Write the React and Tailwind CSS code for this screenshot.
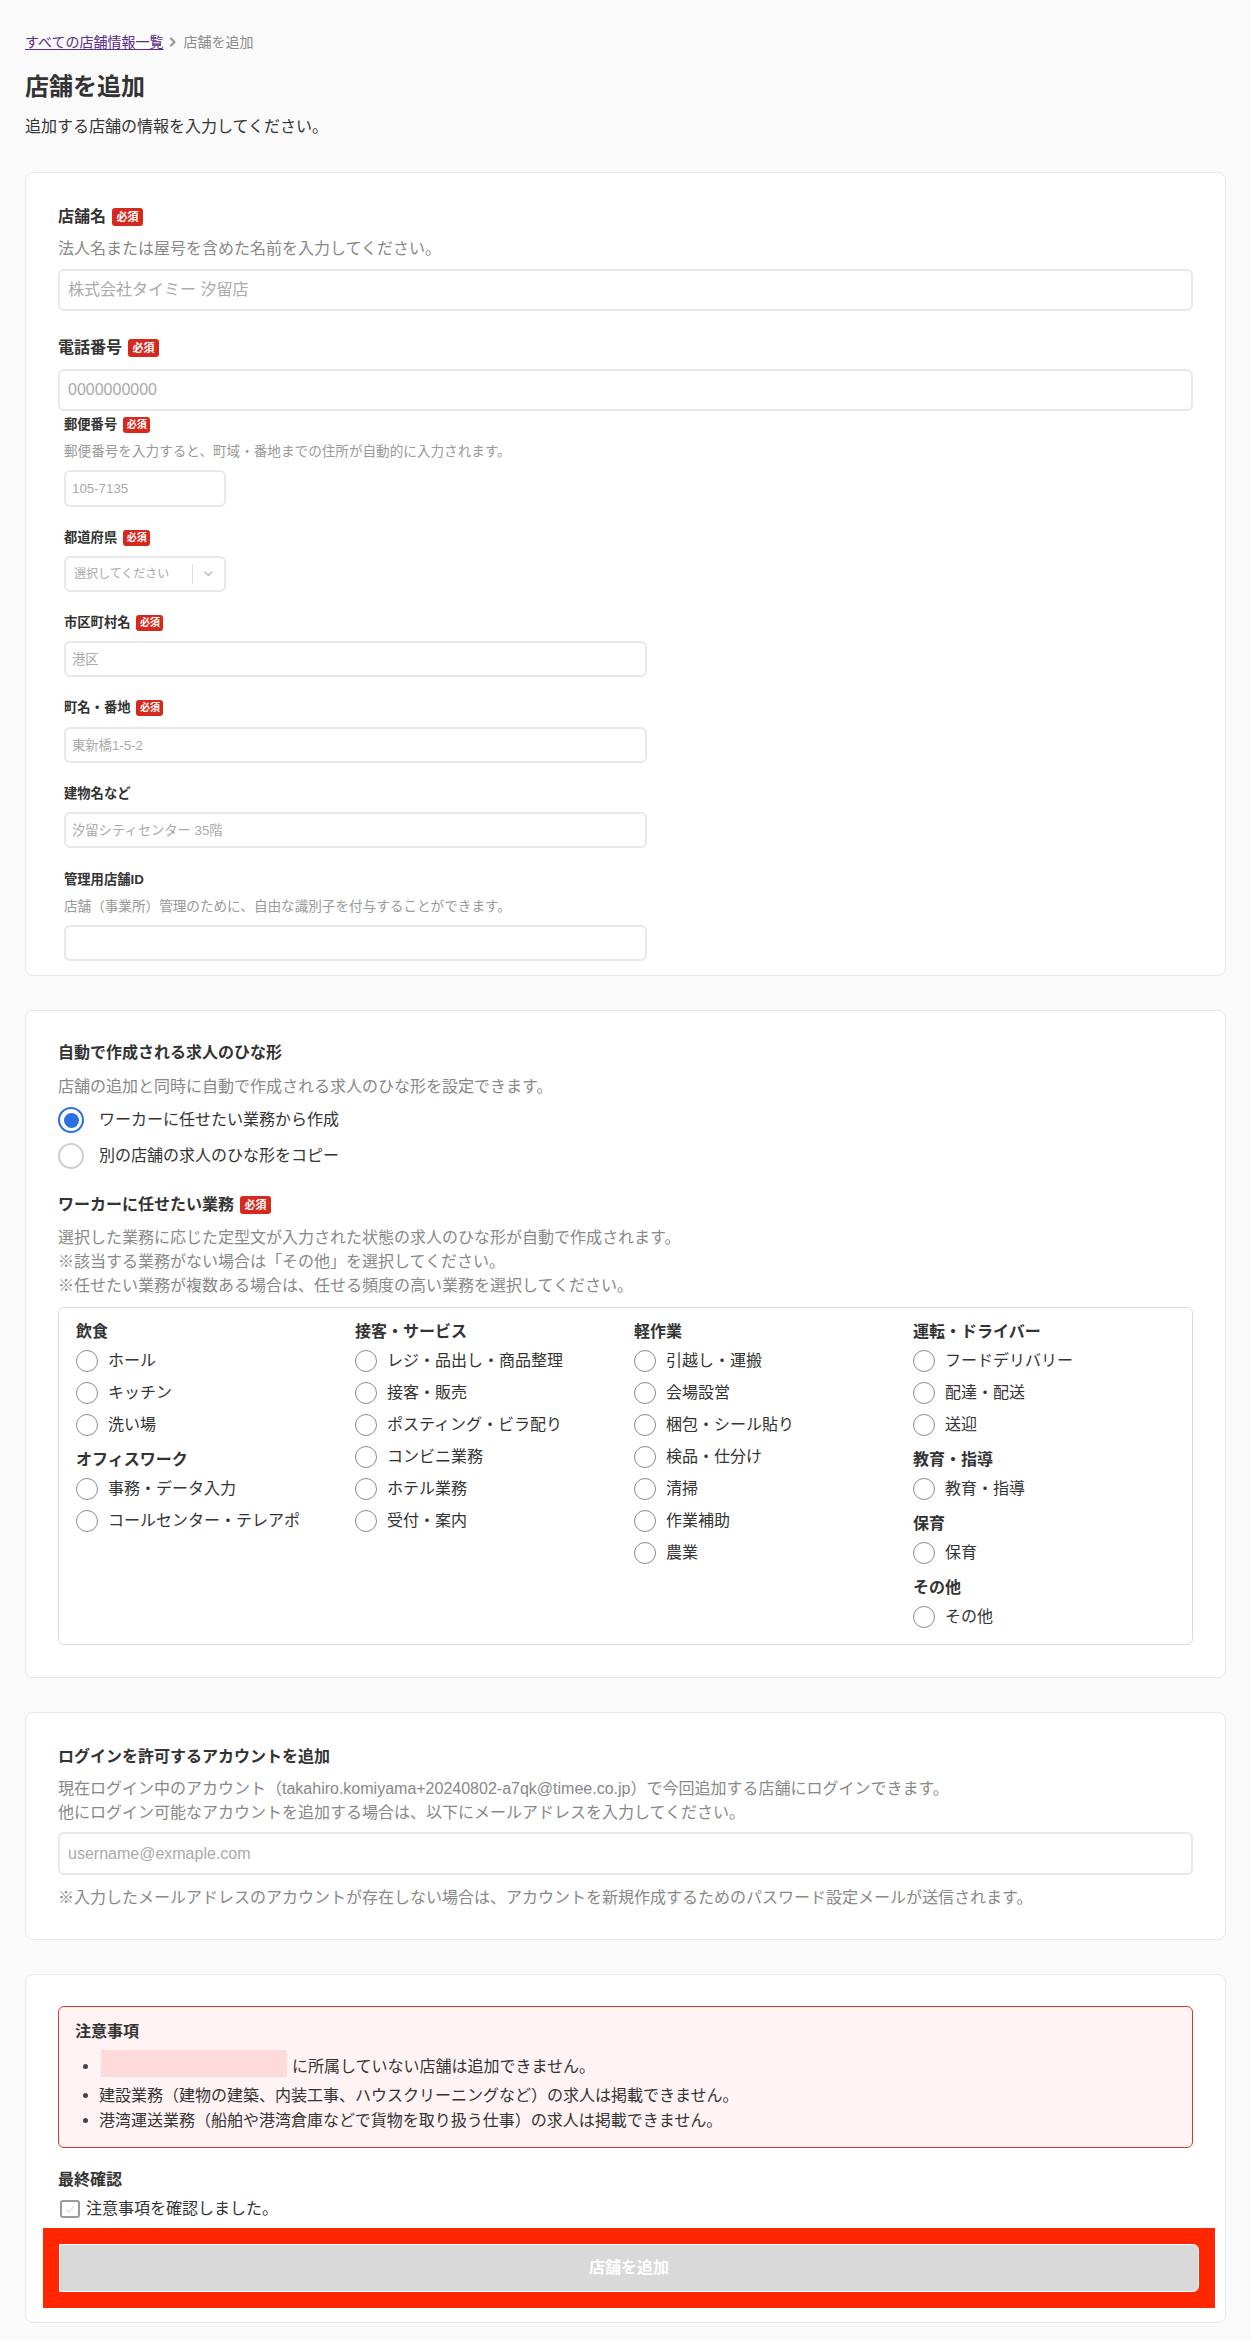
import React from "react";

function Badge({ small = false }) {
  if (small) {
    return (
      <span className="ml-[6px] inline-flex h-4 w-[27px] items-center justify-center rounded-[3px] bg-[#d6281d] text-[10px] font-bold leading-none text-white">
        必須
      </span>
    );
  }
  return (
    <span className="ml-[6px] inline-flex h-[18px] w-[31px] items-center justify-center rounded-[3px] bg-[#d6281d] text-[11px] font-bold leading-none text-white">
      必須
    </span>
  );
}

function FieldLabel({ children, required }) {
  return (
    <div className="flex items-center text-base font-bold leading-6 text-[#333]">
      <span>{children}</span>
      {required && <Badge />}
    </div>
  );
}

function SubLabel({ children, required, className = "" }) {
  return (
    <div className={`flex items-center text-[13.3px] font-bold leading-5 text-[#333] ${className}`}>
      <span>{children}</span>
      {required && <Badge small />}
    </div>
  );
}

function Radio({ label }) {
  return (
    <label className="flex h-8 items-center">
      <span className="h-[22px] w-[22px] shrink-0 rounded-full border-[1.5px] border-[#8c8c8c] bg-white" />
      <span className="ml-[10px] text-base text-[#333]">{label}</span>
    </label>
  );
}

function Group({ title, items, first }) {
  return (
    <div className={first ? "" : "mt-[9px]"}>
      <div className="mb-[3px] text-base font-bold leading-5 text-[#333]">{title}</div>
      {items.map((it) => (
        <Radio key={it} label={it} />
      ))}
    </div>
  );
}

const columns = [
  [
    { title: "飲食", items: ["ホール", "キッチン", "洗い場"] },
    { title: "オフィスワーク", items: ["事務・データ入力", "コールセンター・テレアポ"] },
  ],
  [
    {
      title: "接客・サービス",
      items: [
        "レジ・品出し・商品整理",
        "接客・販売",
        "ポスティング・ビラ配り",
        "コンビニ業務",
        "ホテル業務",
        "受付・案内",
      ],
    },
  ],
  [
    {
      title: "軽作業",
      items: ["引越し・運搬", "会場設営", "梱包・シール貼り", "検品・仕分け", "清掃", "作業補助", "農業"],
    },
  ],
  [
    { title: "運転・ドライバー", items: ["フードデリバリー", "配達・配送", "送迎"] },
    { title: "教育・指導", items: ["教育・指導"] },
    { title: "保育", items: ["保育"] },
    { title: "その他", items: ["その他"] },
  ],
];

const inputBase =
  "block w-full rounded-md border-2 border-[#e8e8e8] bg-white text-[#333] outline-none placeholder:text-[#aaa]";

export default function App() {
  return (
    <div className="min-h-screen bg-[#fafafa] px-[25px] pt-8 pb-[25px] font-['Liberation_Sans','Noto_Sans_CJK_JP',sans-serif] text-[#333]">
      {/* breadcrumb */}
      <nav className="flex items-center text-sm leading-5">
        <a href="#" className="text-[#5a2a8c] underline underline-offset-2">
          すべての店舗情報一覧
        </a>
        <svg className="mx-[6px]" width="8" height="10" viewBox="0 0 8 10" fill="none">
          <path d="M2 1.5 L5.5 5 L2 8.5" stroke="#999" strokeWidth="2.2" strokeLinecap="round" strokeLinejoin="round" />
        </svg>
        <span className="text-[#8a8a8a]">店舗を追加</span>
      </nav>

      <h1 className="mt-[19px] text-2xl font-bold leading-8 text-[#333]">店舗を追加</h1>
      <p className="mt-3 text-base leading-6 text-[#333]">追加する店舗の情報を入力してください。</p>

      {/* store info */}
      <section className="mt-[33px] rounded-lg border border-[#e8e8e8] bg-white px-8 pt-8 pb-[14px]">
        <FieldLabel required>店舗名</FieldLabel>
        <p className="mt-2 text-base leading-6 text-[#888]">法人名または屋号を含めた名前を入力してください。</p>
        <input className={`mt-2 h-[42px] px-2 text-base ${inputBase}`} placeholder="株式会社タイミー 汐留店" />

        <div className="mt-[25px]">
          <FieldLabel required>電話番号</FieldLabel>
        </div>
        <input className={`mt-[9px] h-[42px] px-2 text-base ${inputBase}`} placeholder="0000000000" />

        {/* address block */}
        <div className="mt-1 pl-[6px]">
          <SubLabel required>郵便番号</SubLabel>
          <p className="mt-[7px] text-[13.6px] leading-5 text-[#999]">
            郵便番号を入力すると、町域・番地までの住所が自動的に入力されます。
          </p>
          <input className={`mt-2 h-[37px] !w-[162px] px-[6px] text-[13.3px] ${inputBase}`} placeholder="105-7135" />

          <SubLabel required className="mt-[21px]">都道府県</SubLabel>
          <div className="mt-2 flex h-9 w-[162px] items-center rounded-md border-2 border-[#e8e8e8] bg-white">
            <span className="flex-1 pl-2 text-xs text-[#aaa]">選択してください</span>
            <span className="h-5 w-px bg-[#e0e0e0]" />
            <svg className="mx-[11px]" width="9" height="6" viewBox="0 0 9 6" fill="none">
              <path d="M1 1 L4.5 4.5 L8 1" stroke="#b5b5b5" strokeWidth="1.3" strokeLinecap="round" strokeLinejoin="round" />
            </svg>
          </div>

          <SubLabel required className="mt-[21px]">市区町村名</SubLabel>
          <input className={`mt-2 h-9 !w-[583px] px-[6px] text-[13.3px] ${inputBase}`} placeholder="港区" />

          <SubLabel required className="mt-[21px]">町名・番地</SubLabel>
          <input className={`mt-[9px] h-9 !w-[583px] px-[6px] text-[13.3px] ${inputBase}`} placeholder="東新橋1-5-2" />

          <SubLabel className="mt-[21px]">建物名など</SubLabel>
          <input className={`mt-2 h-9 !w-[583px] px-[6px] text-[13.3px] ${inputBase}`} placeholder="汐留シティセンター 35階" />

          <SubLabel className="mt-[22px]">管理用店舗ID</SubLabel>
          <p className="mt-[7px] text-[13.6px] leading-5 text-[#999]">
            店舗（事業所）管理のために、自由な識別子を付与することができます。
          </p>
          <input className={`mt-2 h-9 !w-[583px] px-[6px] text-[13.3px] ${inputBase}`} />
        </div>
      </section>

      {/* job template */}
      <section className="mt-[34px] rounded-lg border border-[#e8e8e8] bg-white px-8 pt-[30px] pb-8">
        <FieldLabel>自動で作成される求人のひな形</FieldLabel>
        <p className="mt-[10px] text-base leading-6 text-[#888]">
          店舗の追加と同時に自動で作成される求人のひな形を設定できます。
        </p>
        <label className="mt-2 flex h-[26px] items-center">
          <span className="flex h-[26px] w-[26px] items-center justify-center rounded-full border-[2.5px] border-[#2c6fe0] bg-white">
            <span className="h-[15px] w-[15px] rounded-full bg-[#2c6fe0]" />
          </span>
          <span className="ml-[15px] text-base text-[#333]">ワーカーに任せたい業務から作成</span>
        </label>
        <label className="mt-[10px] flex h-[26px] items-center">
          <span className="h-[26px] w-[26px] rounded-full border-2 border-[#cfcfcf] bg-white" />
          <span className="ml-[15px] text-base text-[#333]">別の店舗の求人のひな形をコピー</span>
        </label>

        <div className="mt-6">
          <FieldLabel required>ワーカーに任せたい業務</FieldLabel>
        </div>
        <div className="mt-[9px] text-base leading-6 text-[#888]">
          <p>選択した業務に応じた定型文が入力された状態の求人のひな形が自動で作成されます。</p>
          <p>※該当する業務がない場合は「その他」を選択してください。</p>
          <p>※任せたい業務が複数ある場合は、任せる頻度の高い業務を選択してください。</p>
        </div>

        <div className="mt-[9px] grid grid-cols-4 rounded-md border border-[#dcdcdc] pt-[14px] pb-[11px] pl-[17px]">
          {columns.map((col, i) => (
            <div key={i}>
              {col.map((g, j) => (
                <Group key={g.title} title={g.title} items={g.items} first={j === 0} />
              ))}
            </div>
          ))}
        </div>
      </section>

      {/* accounts */}
      <section className="mt-[34px] rounded-lg border border-[#e8e8e8] bg-white px-8 pt-8 pb-[29px]">
        <FieldLabel>ログインを許可するアカウントを追加</FieldLabel>
        <div className="mt-2 text-base leading-6 text-[#888]">
          <p>現在ログイン中のアカウント（takahiro.komiyama+20240802-a7qk@timee.co.jp）で今回追加する店舗にログインできます。</p>
          <p>他にログイン可能なアカウントを追加する場合は、以下にメールアドレスを入力してください。</p>
        </div>
        <input className={`mt-[7px] h-[43px] px-2 text-base ${inputBase}`} placeholder="username@exmaple.com" />
        <p className="mt-[11px] text-base leading-6 text-[#888]">
          ※入力したメールアドレスのアカウントが存在しない場合は、アカウントを新規作成するためのパスワード設定メールが送信されます。
        </p>
      </section>

      {/* confirmation */}
      <section className="mt-[34px] rounded-lg border border-[#e8e8e8] bg-white px-8 pt-[31px] pb-[14px]">
        <div className="rounded-md border border-[#e0352b] bg-[#fff3f3] px-4 pt-[13px] pb-[14px]">
          <div className="text-base font-bold leading-6 text-[#333]">注意事項</div>
          <ul className="mt-[6px] text-base leading-[25px] text-[#333]">
            <li className="flex items-center">
              <span className="ml-2 mr-[11px] h-[5px] w-[5px] shrink-0 rounded-full bg-[#444]" />
              <span className="mb-[6px] ml-[2px] mr-[5px] inline-block h-[27px] w-[186px] bg-[#ffdada]" />
              <span>に所属していない店舗は追加できません。</span>
            </li>
            <li className="flex items-center">
              <span className="ml-2 mr-[11px] h-[5px] w-[5px] shrink-0 rounded-full bg-[#444]" />
              <span>建設業務（建物の建築、内装工事、ハウスクリーニングなど）の求人は掲載できません。</span>
            </li>
            <li className="flex items-center">
              <span className="ml-2 mr-[11px] h-[5px] w-[5px] shrink-0 rounded-full bg-[#444]" />
              <span>港湾運送業務（船舶や港湾倉庫などで貨物を取り扱う仕事）の求人は掲載できません。</span>
            </li>
          </ul>
        </div>

        <div className="mt-5 text-base font-bold leading-6 text-[#333]">最終確認</div>
        <label className="mt-[5px] flex h-6 items-center">
          <span className="ml-[2px] flex h-[18px] w-5 items-center justify-center rounded-[3px] border-2 border-[#9a9a9a] bg-white">
            <svg width="10" height="9" viewBox="0 0 10 9" fill="none">
              <path d="M1.5 5 L4 7.5 L8.5 1.5" stroke="#e2e2e2" strokeWidth="1.4" strokeLinecap="round" strokeLinejoin="round" />
            </svg>
          </span>
          <span className="ml-[6px] text-base text-[#333]">注意事項を確認しました。</span>
        </label>

        <div className="mt-[7px] -ml-[15px] -mr-[22px] bg-[#ff2600] p-4">
          <button
            type="button"
            className="flex h-12 w-full items-center justify-center rounded-r-md border-[1.5px] border-white bg-[#d9d9d9] text-base font-bold text-white"
          >
            店舗を追加
          </button>
        </div>
      </section>
    </div>
  );
}
